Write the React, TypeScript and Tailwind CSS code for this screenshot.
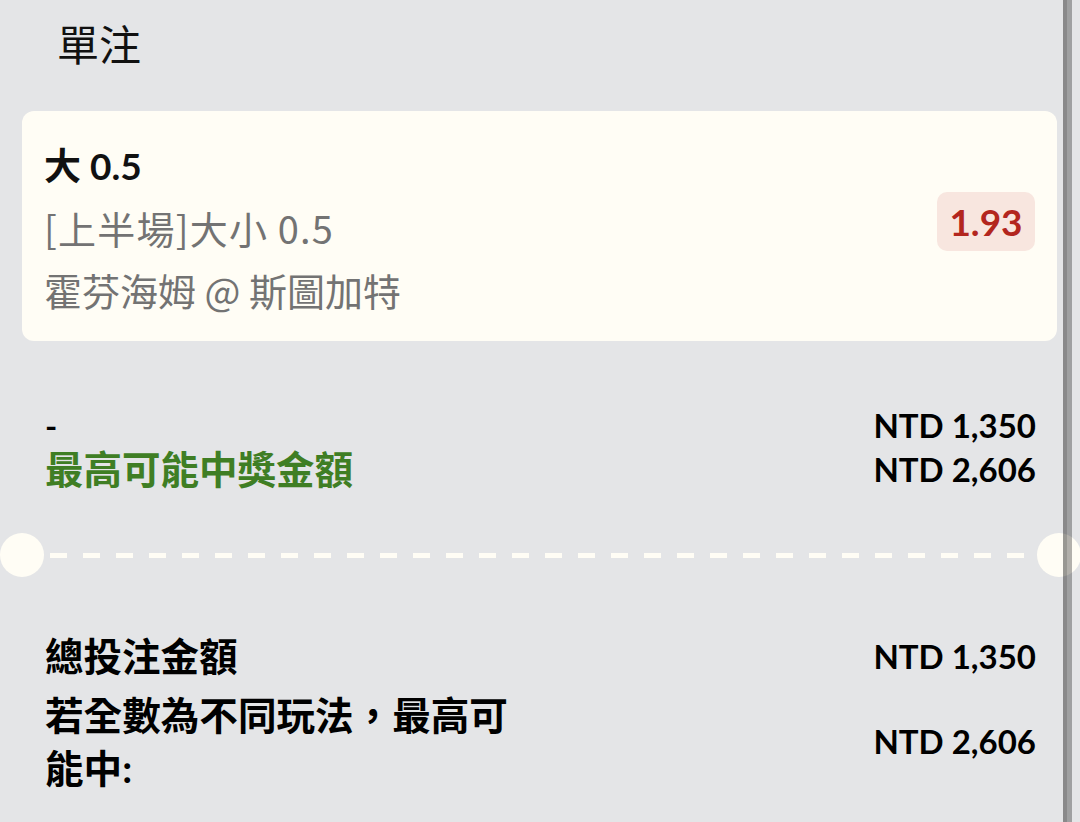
import React from 'react';

const CJK = "font-['Lato','Noto_Sans_CJK_TC',sans-serif]";

function AmountRow({ label, amount, labelClass }: { label: string; amount: string; labelClass: string }) {
  return (
    <div className="flex h-[44px] items-center justify-between">
      <span className={labelClass}>{label}</span>
      <span className="text-[33px] font-bold text-black">{amount}</span>
    </div>
  );
}

export default function App() {
  return (
    <div className={`flex min-h-[822px] w-[1080px] overflow-hidden bg-[#e4e5e7] ${CJK}`}>
      <div className="w-[1063px] shrink-0">
        <div className="h-[111px] pl-[57px] pt-[14px]">
          <h1 className="text-[42px] leading-[63px] font-normal text-[#111]">單注</h1>
        </div>

        {/* bet card */}
        <div className="ml-[22px] mr-[6px] flex h-[230px] items-center justify-between rounded-[12px] bg-[#fffdf5] pl-[22px] pr-[22px]">
          <div className="flex flex-col pt-[4px]">
            <span className="text-[37px] leading-[62px] font-bold text-[#111]">大 0.5</span>
            <span className="font-['Noto_Sans_CJK_TC',sans-serif] text-[38px] leading-[62px] tracking-[1.2px] text-[#737373]">[上半場]大小 0.5</span>
            <span className="font-['Noto_Sans_CJK_TC',sans-serif] text-[38px] leading-[62px] text-[#737373]">霍芬海姆 @ 斯圖加特</span>
          </div>
          <div className="mb-[9px] flex h-[59px] w-[98px] items-center justify-center rounded-[10px] bg-[#f8e6df]">
            <span className="text-[37px] font-bold text-[#b3261e]">1.93</span>
          </div>
        </div>

        <div className="mt-[63px] px-[45px] pr-[27px]">
          <AmountRow label="-" amount="NTD 1,350" labelClass="text-[33px] font-bold text-black" />
          <AmountRow label="最高可能中獎金額" amount="NTD 2,606" labelClass="text-[38.5px] font-bold text-[#3f7e24]" />
        </div>

        {/* ticket divider */}
        <div className="relative mt-[41px] flex h-[44px] items-center">
          <div className="h-[44px] w-[44px] shrink-0 rounded-full bg-[#fffdf5]" />
          <div className="ml-[6px] mr-[28px] h-[5px] flex-1 bg-[repeating-linear-gradient(90deg,#fffdf5_0px,#fffdf5_17px,transparent_17px,transparent_33px)]" />
          <div className="absolute left-[1037px] top-0 h-[44px] w-[44px] rounded-full bg-[#fffdf5]" />
        </div>

        <div className="mt-[53px] flex flex-col gap-[5px] pl-[45px] pr-[27px]">
          <div className="flex h-[54px] items-center justify-between">
            <span className="text-[38.5px] font-bold text-black">總投注金額</span>
            <span className="text-[33px] font-bold text-black">NTD 1,350</span>
          </div>
          <div className="flex items-center justify-between">
            <span className="max-w-[480px] text-[38.6px] leading-[53px] font-bold text-black">若全數為不同玩法，最高可能中:</span>
            <span className="text-[33px] font-bold text-black">NTD 2,606</span>
          </div>
        </div>
      </div>

      <div className="relative z-10 flex w-[9px] shrink-0">
        <div className="w-[4px] bg-black/40" />
        <div className="w-[5px] bg-black/30" />
      </div>
      <div className="flex-1" />
    </div>
  );
}
